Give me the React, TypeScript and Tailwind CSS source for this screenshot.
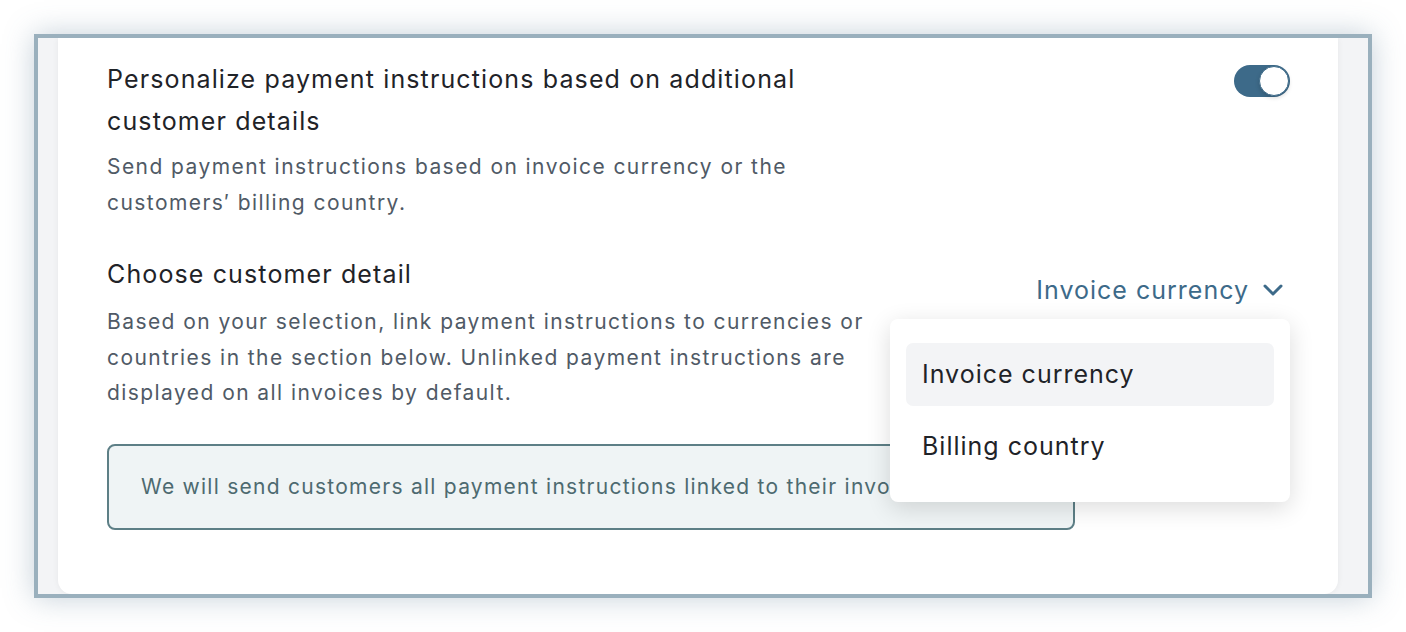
import React from 'react';

const font = { fontFamily: 'Inter, "Noto Sans", sans-serif' };

function Toggle() {
  return (
    <div className="relative w-[56px] h-[32px] rounded-full bg-[#3d6a89] mt-[7px] shrink-0">
      <div className="absolute right-[1px] top-[1px] w-[30px] h-[30px] rounded-full bg-white border border-[#3d6a89] shadow-[0_2px_4px_rgba(0,0,0,0.15)]" />
    </div>
  );
}

function Chevron() {
  return (
    <svg width="20" height="14" viewBox="0 0 20 14" fill="none" className="mr-[7px]">
      <polyline points="2,3 10,11 18,3" stroke="#3d6a89" strokeWidth="3" strokeLinecap="round" strokeLinejoin="round" />
    </svg>
  );
}

export default function App() {
  return (
    <div className="w-[1406px] h-[632px] bg-white pt-[34px] pl-[34px]" style={font}>
      <div className="w-[1338px] h-[564px] border-4 border-[#9ab0bd] bg-[#f3f4f6] flex pl-[20px] pr-[30px] overflow-hidden shadow-[0_0_28px_rgba(90,120,145,0.35)]">
        <div className="flex-1 bg-white rounded-b-[14px] pt-[20px] pl-[49px] pr-[48px] shadow-[0_0_6px_rgba(0,0,0,0.06)]">
          {/* Personalize toggle */}
          <div className="flex justify-between items-start">
            <div className="max-w-[720px]">
              <h2 className="text-[25px] leading-[42px] tracking-[0.045em] text-[#1f2328]">
                Personalize payment instructions based on additional customer details
              </h2>
              <p className="mt-[7px] text-[21px] leading-[36px] tracking-[0.068em] text-[#505a66]">
                Send payment instructions based on invoice currency or the customers′ billing country.
              </p>
            </div>
            <Toggle />
          </div>

          {/* Choose customer detail */}
          <div className="flex justify-between items-start mt-[32px]">
            <div className="max-w-[780px]">
              <h3 className="text-[25px] leading-[42px] tracking-[0.045em] text-[#1f2328]">Choose customer detail</h3>
              <p className="mt-[9px] text-[21px] leading-[35.5px] tracking-[0.068em] text-[#505a66]">
                Based on your selection, link payment instructions to currencies or countries in the section below. Unlinked payment instructions are displayed on all invoices by default.
              </p>
            </div>
            <div className="relative mt-[22px]">
              <button className="flex items-center gap-[14px] text-[25px] leading-[30px] tracking-[0.04em] text-[#3d6a89]">
                Invoice currency
                <Chevron />
              </button>
              <div className="absolute right-0 top-[44px] z-10 w-[400px] bg-white rounded-[8px] shadow-[0_6px_24px_rgba(0,0,0,0.14)] px-[16px] py-[24px] flex flex-col gap-[9px]">
                <div className="h-[63px] rounded-[7px] bg-[#f3f4f6] flex items-center px-[16px] text-[25px] tracking-[0.04em] text-[#1f2328]">
                  Invoice currency
                </div>
                <div className="h-[63px] rounded-[7px] flex items-center px-[16px] text-[25px] tracking-[0.04em] text-[#1f2328]">
                  Billing country
                </div>
              </div>
            </div>
          </div>

          <div className="mt-[33px] w-[968px] h-[86px] border-2 border-[#5d7f86] bg-[#eff4f5] rounded-[8px] flex items-center pl-[32px] overflow-hidden whitespace-nowrap">
            <span className="text-[21px] tracking-[0.06em] text-[#4d6a70]">
              We will send customers all payment instructions linked to their invoice currency.
            </span>
          </div>
        </div>
      </div>
    </div>
  );
}
